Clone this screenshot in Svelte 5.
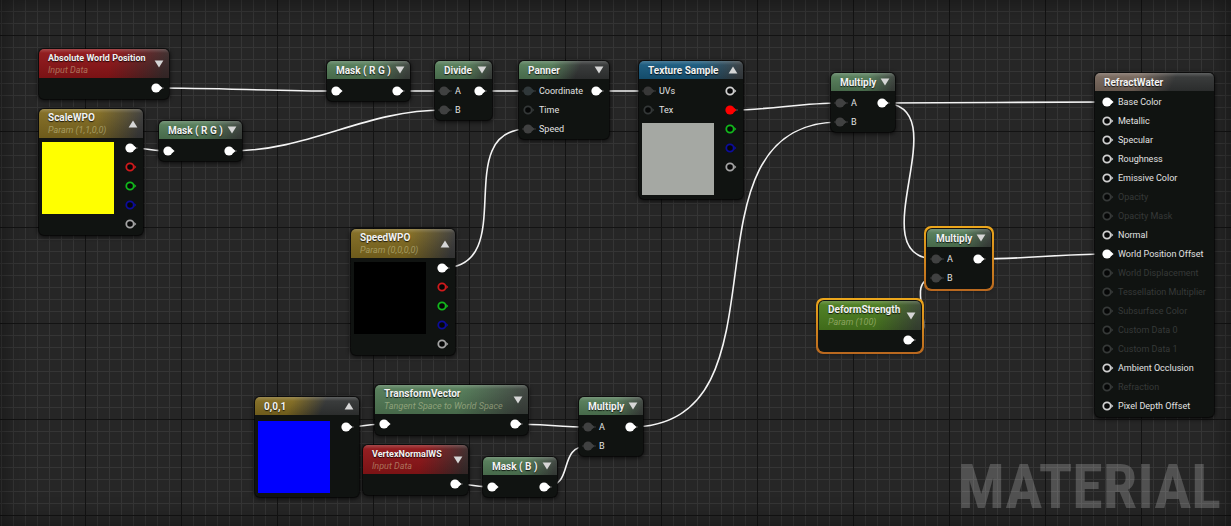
<script lang="ts">
  type Pin = { name?: string; color?: string; linked?: boolean; off?: boolean };
  type GraphNode = {
    title: string;
    sub?: string;
    kind: string;
    x: number;
    y: number;
    w: number;
    ins?: Pin[];
    outs?: Pin[];
    preview?: string;
    arrow?: 'up' | 'down';
    selected?: boolean;
  };

  const white = '#ffffff';
  const grey = '#404141';

  const out: Pin[] = [{ color: white, linked: true }];
  const plainIn: Pin[] = [{ color: white, linked: true }];
  const ab: Pin[] = [
    { name: 'A', color: grey, linked: true },
    { name: 'B', color: grey, linked: true },
  ];
  const channels: Pin[] = [
    { color: '#d01a1c' },
    { color: '#12b81c' },
    { color: '#0c0c9c' },
    { color: '#a4a4a4' },
  ];

  const result = (name: string, off = false, linked = false): Pin => ({
    name,
    off,
    linked,
    color: off ? '#363938' : linked ? white : '#d0d0d0',
  });

  let nodes = $state<GraphNode[]>([
    { title: 'Absolute World Position', sub: 'Input Data', kind: 'red', x: 39, y: 49, w: 130, outs: out, arrow: 'down' },
    { title: 'ScaleWPO', sub: 'Param (1,1,0,0)', kind: 'gold', x: 39, y: 109, w: 104, outs: [...out, ...channels], preview: '#ffff00', arrow: 'up' },
    { title: 'Mask ( R G )', kind: 'green', x: 159, y: 121, w: 83, ins: plainIn, outs: out, arrow: 'down' },
    { title: 'Mask ( R G )', kind: 'green', x: 327, y: 61, w: 83, ins: plainIn, outs: out, arrow: 'down' },
    { title: 'Divide', kind: 'green', x: 435, y: 61, w: 57, ins: ab, outs: out, arrow: 'down' },
    {
      title: 'Panner', kind: 'green fade', x: 519, y: 61, w: 90, outs: out, arrow: 'down',
      ins: [
        { name: 'Coordinate', color: '#30383a', linked: true },
        { name: 'Time', color: '#333737' },
        { name: 'Speed', color: grey, linked: true },
      ],
    },
    {
      title: 'Texture Sample', kind: 'blue', x: 639, y: 61, w: 104, preview: '#a5a8a3', arrow: 'up',
      ins: [
        { name: 'UVs', color: '#383838', linked: true },
        { name: 'Tex', color: '#333737' },
      ],
      outs: [{ color: '#d0d0d0' }, { color: '#ff0000', linked: true }, ...channels.slice(1)],
    },
    { title: 'Multiply', kind: 'green', x: 831, y: 73, w: 64, ins: ab, outs: out, arrow: 'down' },
    { title: 'Multiply', kind: 'green', x: 927, y: 229, w: 64, ins: ab, outs: out, arrow: 'down', selected: true },
    { title: 'DeformStrength', sub: 'Param (100)', kind: 'lime', x: 819, y: 301, w: 102, outs: out, arrow: 'down', selected: true },
    { title: 'SpeedWPO', sub: 'Param (0,0,0,0)', kind: 'gold', x: 351, y: 229, w: 104, outs: [...out, ...channels], preview: '#000000', arrow: 'up' },
    { title: '0,0,1', kind: 'gold fade', x: 255, y: 397, w: 104, outs: out, preview: '#0000ff', arrow: 'up' },
    { title: 'TransformVector', sub: 'Tangent Space to World Space', kind: 'green', x: 375, y: 385, w: 153, ins: plainIn, outs: out, arrow: 'down' },
    { title: 'VertexNormalWS', sub: 'Input Data', kind: 'red', x: 363, y: 445, w: 105, outs: out, arrow: 'down' },
    { title: 'Mask ( B )', kind: 'green', x: 483, y: 457, w: 74, ins: plainIn, outs: out, arrow: 'down' },
    { title: 'Multiply', kind: 'green', x: 579, y: 397, w: 64, ins: ab, outs: out, arrow: 'down' },
    {
      title: 'RefractWater', kind: 'result fade', x: 1095, y: 73, w: 119,
      ins: [
        result('Base Color', false, true),
        result('Metallic'),
        result('Specular'),
        result('Roughness'),
        result('Emissive Color'),
        result('Opacity', true),
        result('Opacity Mask', true),
        result('Normal'),
        result('World Position Offset', false, true),
        result('World Displacement', true),
        result('Tessellation Multiplier', true),
        result('Subsurface Color', true),
        result('Custom Data 0', true),
        result('Custom Data 1', true),
        result('Ambient Occlusion'),
        result('Refraction', true),
        result('Pixel Depth Offset'),
      ],
    },
  ]);

  // x1, y1, x2, y2, tangent length
  const wires = [
    [157, 88, 336, 91, 60],
    [131, 148, 168, 151, 12],
    [230, 151, 444, 110, 80],
    [397, 91, 444, 91, 12],
    [479, 91, 528, 91, 12],
    [596, 91, 648, 91, 12],
    [442, 268, 528, 129, 80],
    [731, 110, 840, 103, 40],
    [630, 427, 840, 122, 170],
    [882, 103, 1107, 102, 70],
    [882, 103, 936, 259, 80],
    [978, 259, 1107, 254, 50],
    [908, 340, 936, 278, 38],
    [346, 427, 384, 424, 12],
    [515, 424, 588, 427, 24],
    [455, 484, 492, 487, 12],
    [544, 487, 588, 446, 32],
  ];

  const curve = ([x1, y1, x2, y2, d]: number[]) =>
    `M${x1} ${y1} C${x1 + d} ${y1} ${x2 - d} ${y2} ${x2} ${y2}`;

  function toggle(node: GraphNode) {
    node.arrow = node.arrow === 'up' ? 'down' : 'up';
  }
</script>

{#snippet pinIcon(pin: Pin, side: string)}
  <svg class="pin" width="14" height="12" viewBox="0 0 14 12" aria-hidden="true">
    {#if pin.linked}
      {#if side === 'out'}
        <path d="M10 6H14" stroke="#555" stroke-width="1" />
      {:else if pin.color !== white}
        <path d="M0 6H14" stroke="#2e2f2f" stroke-width="1.4" />
      {/if}
      <circle cx="6" cy="6" r="4.6" fill={pin.color} />
      <path d="M10 3.8 12.6 6 10 8.2Z" fill={pin.color} />
    {:else}
      <circle cx="6" cy="6" r="3.7" fill="#060707" stroke={pin.color} stroke-width="1.8" />
      <path d="M10.3 4 12.3 6 10.3 8Z" fill={pin.color} />
    {/if}
  </svg>
{/snippet}

<main class="graph">
  <svg class="wires" aria-hidden="true">
    {#each wires as wire}
      <path d={curve(wire)} />
    {/each}
  </svg>

  {#each nodes as node}
    <section
      class="node {node.kind}"
      class:selected={node.selected}
      class:tall={node.sub}
      style="left: {node.x}px; top: {node.y}px; width: {node.w}px"
    >
      <header>
        <div class="titles">
          <h2>{node.title}</h2>
          {#if node.sub}<p>{node.sub}</p>{/if}
        </div>
        {#if node.arrow}
          <button aria-label="Toggle preview" onclick={() => toggle(node)}>
            <svg width="10" height="8" viewBox="0 0 10 8">
              <path d={node.arrow === 'up' ? 'M0.6 7.4 5 0.6 9.4 7.4Z' : 'M0.6 0.6H9.4L5 7.4Z'} />
            </svg>
          </button>
        {/if}
      </header>
      <div class="body">
        <div class="left">
          {#each node.ins ?? [] as pin}
            <div class="row" class:off={pin.off}>
              {@render pinIcon(pin, 'in')}
              {#if pin.name}<span>{pin.name}</span>{/if}
            </div>
          {/each}
          {#if node.preview}
            <div class="preview" style="background: {node.preview}"></div>
          {/if}
        </div>
        <div class="right">
          {#each node.outs ?? [] as pin}
            <div class="row">{@render pinIcon(pin, 'out')}</div>
          {/each}
        </div>
      </div>
    </section>
  {/each}

  <div class="watermark">MATERIAL</div>
</main>

<style>
  :global(body) {
    margin: 0;
    background: #262626;
  }

  .graph {
    position: relative;
    min-height: 100vh;
    overflow: hidden;
    font-family: Roboto, "Liberation Sans", sans-serif;
    font-size: 9px;
    color: #e2e2e2;
    background-color: #262626;
    background-image:
      linear-gradient(to right, #131313 1px, transparent 1px),
      linear-gradient(to bottom, #131313 1px, transparent 1px),
      linear-gradient(to right, #353535 1px, transparent 1px),
      linear-gradient(to bottom, #353535 1px, transparent 1px);
    background-size: 96px 96px, 96px 96px, 12px 12px, 12px 12px;
    background-position: 85px 0, 0 35px, 1px 0, 0 11px;
  }
  .graph::before {
    content: '';
    position: absolute;
    inset: 0;
    box-shadow: inset 0 0 24px rgba(0, 0, 0, 0.5);
  }

  .wires {
    position: absolute;
    inset: 0;
    width: 100%;
    height: 100%;
  }
  .wires path {
    fill: none;
    stroke: #f4f4f4;
    stroke-width: 1.6;
  }

  .node {
    --tint: #527a56;
    --end: #3c423d;
    position: absolute;
    isolation: isolate;
    border-radius: 5px;
    background: #101311;
    box-shadow: 0 0 0 1px rgba(0, 0, 0, 0.5), 0 1px 4px 1px rgba(0, 0, 0, 0.7);
  }
  .red { --tint: #8e1518; --end: #3a2a2a; }
  .gold { --tint: #806a20; --end: #3a3a3a; }
  .blue { --tint: #17587c; --end: #363c40; }
  .lime { --tint: #4a7c1e; --end: #3a4634; }
  .result { --tint: #75655a; --end: #2c2e2e; }

  .selected::before {
    content: '';
    position: absolute;
    inset: -3px;
    z-index: -2;
    border-radius: 7px;
    background: linear-gradient(#eca71c, #b9681f);
  }
  .selected::after {
    content: '';
    position: absolute;
    inset: -1px;
    z-index: -1;
    border-radius: 6px;
    background: #101311;
  }

  header {
    display: flex;
    align-items: center;
    height: 18px;
    padding: 0 5px 0 9px;
    border-radius: 5px 5px 0 0;
    background:
      linear-gradient(rgba(255, 255, 255, 0.22), rgba(255, 255, 255, 0.04) 4px, rgba(0, 0, 0, 0.14)),
      linear-gradient(105deg, var(--tint) 55%, var(--end) 95%);
  }
  .fade header {
    background:
      linear-gradient(rgba(255, 255, 255, 0.22), rgba(255, 255, 255, 0.04) 4px, rgba(0, 0, 0, 0.14)),
      linear-gradient(115deg, var(--tint) 35%, #323434 65%);
  }
  .tall header {
    height: 29px;
  }
  .titles {
    flex: 1;
    padding-top: 2px;
    white-space: nowrap;
  }
  .tall .titles {
    padding: 0;
  }
  h2 {
    margin: 0;
    font-size: 10px;
    line-height: 12px;
    font-weight: 700;
    color: #f2f2f2;
    text-shadow: 0 1px 1px rgba(0, 0, 0, 0.8);
  }
  .red h2 {
    font-size: 9px;
  }
  p {
    margin: 0;
    font-size: 9px;
    line-height: 12px;
    font-style: italic;
    color: rgba(225, 225, 180, 0.45);
  }
  button {
    display: flex;
    padding: 0;
    border: 0;
    background: none;
    cursor: pointer;
  }
  button path {
    fill: #d6d6d6;
  }

  .body {
    display: flex;
    justify-content: space-between;
    padding: 2px 5px 1px 3px;
  }
  .tall .body {
    padding-top: 0;
    padding-bottom: 2px;
  }
  .result .body {
    padding: 1px 5px 2px 6px;
  }
  .row {
    display: flex;
    align-items: center;
    gap: 3px;
    height: 19px;
    white-space: nowrap;
  }
  .off {
    color: #363938;
  }
  .pin {
    flex: none;
  }
  .preview {
    width: 72px;
    height: 72px;
    margin: 4px 0 3px;
  }

  .watermark {
    position: absolute;
    right: 10px;
    bottom: 4px;
    font-family: "Roboto Condensed", "Liberation Sans Narrow", Roboto, sans-serif;
    font-size: 62px;
    line-height: 70px;
    font-weight: 700;
    color: rgba(255, 255, 255, 0.2);
    pointer-events: none;
  }
</style>
